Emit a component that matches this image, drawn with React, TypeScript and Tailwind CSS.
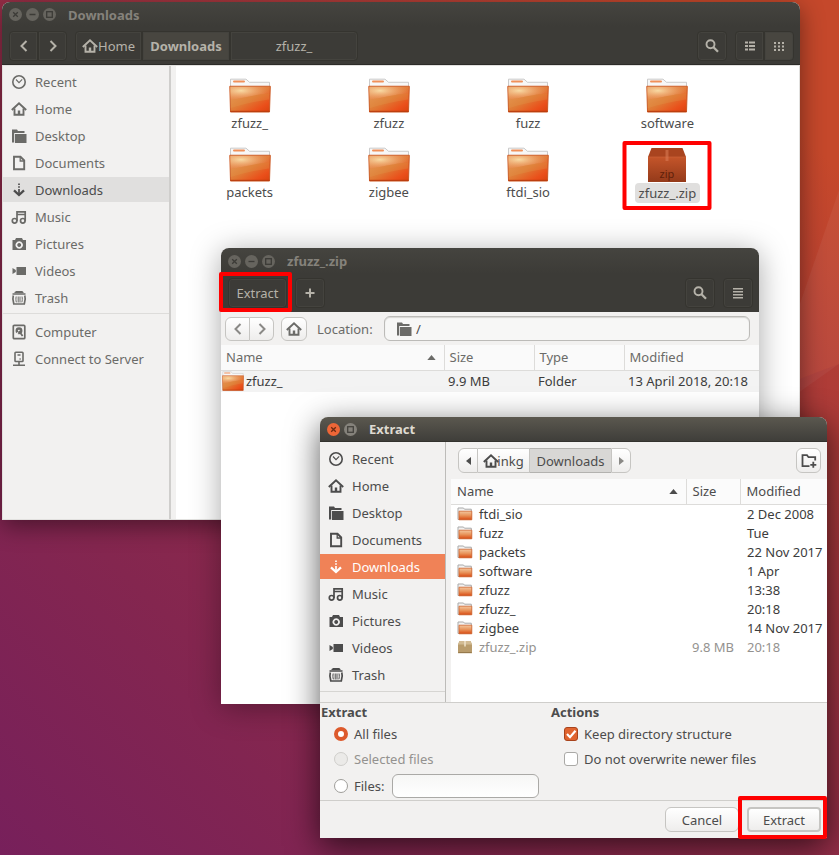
import React, { useId, useState } from 'react';
import clsx from 'clsx';

type IconName =
  | 'recent' | 'home' | 'desktop' | 'documents' | 'downloads' | 'music'
  | 'pictures' | 'videos' | 'trash' | 'computer' | 'server';

const iconShapes: Record<IconName, React.ReactNode> = {
  recent: (
    <g fill="none" stroke="currentColor">
      <circle cx="8" cy="8" r="6.2" strokeWidth="1.6" />
      <path d="M5 5.5 8 8.6l3.2-3.2" strokeWidth="1.1" />
    </g>
  ),
  home: (
    <g fill="none" stroke="currentColor" strokeWidth="1.9">
      <path d="M.8 9 8 2.2 15.2 9" />
      <path d="M3.5 7.5v6.2h9V7.5" />
      <path d="M8 13.5V9.5" strokeWidth="2.4" />
    </g>
  ),
  desktop: (
    <g fill="currentColor">
      <path d="M1 1.500h5l1 1.500h6.500V5H3.200v9.500H1z" />
      <path d="M4 6h11.500v9H4z" />
    </g>
  ),
  documents: (
    <g fill="none" stroke="currentColor" strokeWidth="1.9">
      <path d="M3 1.800h6.500l3.700 3.700v8.700H3z" />
      <path d="M9.200 2v4h4" strokeWidth="1.3" />
    </g>
  ),
  downloads: (
    <g fill="none" stroke="currentColor">
      <path d="M8 1.500V3M8 4.200v1.500M8 7v6" strokeWidth="1.700" />
      <path d="M3 8.300 8 13l5-4.700" strokeWidth="2.300" />
    </g>
  ),
  music: (
    <g fill="none" stroke="currentColor" strokeWidth="1.700">
      <circle cx="3.600" cy="11.800" r="2.300" />
      <circle cx="11.800" cy="11.800" r="2.300" />
      <path d="M6 12V2.800h8.200V12M6 5.500h8" />
    </g>
  ),
  pictures: (
    <path
      fill="currentColor"
      fillRule="evenodd"
      d="M5 2h6l1 2h3v10H1.500V4H4zM8.200 5.300a3.700 3.700 0 1 0 .01 0zM8.200 7.100a1.900 1.900 0 1 1-.01 0z"
    />
  ),
  videos: <path fill="currentColor" d="M5.500 4H15v8H5.500zM1.500 5 4.800 7v2L1.500 11z" />,
  trash: (
    <g fill="none" stroke="currentColor">
      <path d="M4.500 1.800h7.200M1.500 4h13" strokeWidth="1.700" />
      <path d="M3.500 2.500h9" strokeWidth="1.200" />
      <path d="M2.300 5.500c-.8 2.500-.8 4.500.5 8.500h10.500c1.300-4 1.300-6 .5-8.500" strokeWidth="1.700" />
      <path d="M5.200 6.500c-.4 2-.4 4 .2 5.800M7.200 6.500v6M9 6.500v6M11 6.500c.4 2 .4 4-.2 5.800" strokeWidth="1" />
    </g>
  ),
  computer: (
    <g fill="none" stroke="currentColor">
      <rect x="2.300" y="1.300" width="11.500" height="13.400" rx="1" strokeWidth="1.700" />
      <circle cx="8" cy="6.800" r="2.300" strokeWidth="2.300" />
      <path d="M4 11.500 7 8.500" stroke="#f2f1f0" strokeWidth="1.600" />
      <path d="m8 7 3.600 5" strokeWidth="1.800" />
    </g>
  ),
  server: (
    <g fill="none" stroke="currentColor" strokeWidth="1.600">
      <rect x="4" y="1.200" width="8" height="9.300" rx=".8" />
      <path d="M6.500 4h3M8 10.500v4M2 14.300h12" />
      <path d="M8.500 8h1.200" strokeWidth="1.300" />
    </g>
  ),
};

const Icon = ({ name, className }: { name: IconName; className?: string }) => (
  <svg viewBox="0 0 16 16" className={clsx('size-4 shrink-0', className)} aria-hidden="true">
    {iconShapes[name]}
  </svg>
);

const SearchIcon = () => (
  <svg viewBox="0 0 16 16" className="size-4" fill="none" stroke="currentColor" aria-hidden="true">
    <circle cx="6.500" cy="6.300" r="4" strokeWidth="1.900" />
    <path d="m9.500 9.300 4.500 4.500" strokeWidth="2.300" />
  </svg>
);

const Chevron = ({ flip }: { flip?: boolean }) => (
  <svg viewBox="0 0 16 16" className={clsx('size-4', flip && 'rotate-180')} fill="none" stroke="currentColor" aria-hidden="true">
    <path d="M10.500 3 5.500 8l5 5" strokeWidth="2" />
  </svg>
);

const FolderIcon = ({ className }: { className?: string }) => {
  const id = useId();
  return (
    <svg viewBox="0 0 42 36" className={clsx('shrink-0', className)} preserveAspectRatio="none" aria-hidden="true">
      <defs>
        <linearGradient id={`${id}-base`} x1="0" y1="0" x2="1" y2="1">
          <stop offset="0" stopColor="#e89b5c" />
          <stop offset="0.500" stopColor="#e07a35" />
          <stop offset="0.800" stopColor="#ea4f1a" />
          <stop offset="1" stopColor="#d8430f" />
        </linearGradient>
        <radialGradient id={`${id}-glow`} cx="0.270" cy="0.300" r="0.700">
          <stop offset="0" stopColor="#f8dba4" />
          <stop offset="1" stopColor="#f0a070" stopOpacity="0.150" />
        </radialGradient>
      </defs>
      <path d="M1.500 34V1.200h15.500l3.500 3.200h20V34z" fill="#f7f7f7" stroke="#c9c9c9" />
      <rect x="4" y="2.500" width="12" height="2" rx="1" fill="#f0905a" />
      <path d="M.8 8.500h40.500l-.8 26.500h-39z" fill={`url(#${id}-base)`} stroke="#cc5a26" />
      <path d="M1.300 9h39.500l-.5 7C26 17 14 20.500 1.500 22.500z" fill={`url(#${id}-glow)`} />
      <path d="M1.500 22.500C14 20.500 26 17 40.300 16l-.2 6C26 24 14 27 1.600 31z" fill="#e0a050" opacity=".250" />
      <path d="M1.500 34.300h39" stroke="#b73a0c" />
    </svg>
  );
};

const SmallFolder = () => {
  const id = useId();
  return (
    <svg viewBox="0 0 16 14" className="h-3.5 w-4 shrink-0" aria-hidden="true">
      <defs>
        <linearGradient id={id} x1="0" y1="0" x2="0" y2="1">
          <stop offset="0" stopColor="#f3c79f" />
          <stop offset="0.500" stopColor="#e8935a" />
          <stop offset="1" stopColor="#d94a12" />
        </linearGradient>
      </defs>
      <path d="M1 12.500V1h5.500l1 1.200h6.800v10.300z" fill="#f2f2f2" stroke="#a9a9a9" />
      <path d="M2 4.200h12.800v8.600H2z" fill={`url(#${id})`} stroke="#d2652f" strokeWidth=".8" />
    </svg>
  );
};

const SmallPackage = () => (
  <svg viewBox="0 0 16 14" className="h-3.5 w-4 shrink-0" aria-hidden="true">
    <path d="M2.500 1h11L15 4.500v8.800H1V4.500z" fill="#b99c6c" />
    <path d="M2.500 1h11L15 4.500H1z" fill="#d2bb93" />
    <path d="M8 1v5.500" stroke="#efe3cb" strokeWidth="1.500" />
    <path d="M1.300 12.500h13.400" stroke="#96794c" />
  </svg>
);

const PackageIcon = () => {
  const id = useId();
  return (
    <svg viewBox="0 0 42 36" className="h-9 w-[42px]" aria-hidden="true">
      <defs>
        <linearGradient id={id} x1="0" y1="0" x2="0" y2="1">
          <stop offset="0" stopColor="#c4552a" />
          <stop offset="1" stopColor="#943a1a" />
        </linearGradient>
      </defs>
      <path d="M2 10h38v25H2z" fill={`url(#${id})`} />
      <path d="M5.500 1h31L40 10H2z" fill="#a9441f" />
      <path d="M2 10h38" stroke="#cc6238" strokeWidth=".7" />
      <path d="M19.500 3h3v11h-3z" fill="#d87a53" opacity=".6" />
      <text x="21" y="31" textAnchor="middle" fontSize="11" fill="#5f200a">zip</text>
    </svg>
  );
};

const places: { name: string; icon: IconName }[] = [
  { name: 'Recent', icon: 'recent' },
  { name: 'Home', icon: 'home' },
  { name: 'Desktop', icon: 'desktop' },
  { name: 'Documents', icon: 'documents' },
  { name: 'Downloads', icon: 'downloads' },
  { name: 'Music', icon: 'music' },
  { name: 'Pictures', icon: 'pictures' },
  { name: 'Videos', icon: 'videos' },
  { name: 'Trash', icon: 'trash' },
];

const devices: { name: string; icon: IconName }[] = [
  { name: 'Computer', icon: 'computer' },
  { name: 'Connect to Server', icon: 'server' },
];

const WindowButton = ({ kind, active }: { kind: 'close' | 'min' | 'max'; active?: boolean }) => (
  <button
    aria-label={kind}
    className={clsx(
      'flex size-[13px] items-center justify-center rounded-full',
      active && kind === 'close' && 'bg-[#ee6637] text-[#6b2a12]',
      active && kind !== 'close' && 'bg-[#85827b] text-[#45433e]',
      !active && 'bg-[#66645e] text-[#3c3b37]'
    )}
  >
    <svg viewBox="0 0 13 13" className="size-[13px]" fill="none" stroke="currentColor" strokeWidth="1.300" aria-hidden="true">
      {kind === 'close' && <path d="m4.200 4.200 4.600 4.600m0-4.600L4.200 8.800" />}
      {kind === 'min' && <path d="M3.500 6.500h6" />}
      {kind === 'max' && <rect x="3.700" y="3.700" width="5.600" height="5.600" />}
    </svg>
  </button>
);

const PlaceRow = ({ name, icon, className }: { name: string; icon: IconName; className?: string }) => (
  <button className={clsx('mb-0.5 flex h-[25px] w-full items-center gap-2 pl-2 text-left whitespace-nowrap', className)}>
    <Icon name={icon} />
    {name}
  </button>
);

const darkButton = 'flex h-[30px] items-center justify-center border border-[#35342f] shadow-[inset_0_0_0_1px_#44433e]';

const files = ['zfuzz_', 'zfuzz', 'fuzz', 'software', 'packets', 'zigbee', 'ftdi_sio'];

const NautilusWindow = () => (
  <section className="absolute top-0.5 right-[39px] left-0.5 flex min-h-[518px] flex-col overflow-hidden rounded-t-lg bg-white shadow-[0_6px_24px_rgba(0,0,0,0.45)]">
    <header className="border-b border-[#2c2b28] bg-linear-to-b from-[#45443f] to-[#3c3b37] to-40% pb-[3px] text-[#b5b2a9]">
      <div className="flex h-[29px] items-center gap-1 pb-1 pl-[7px]">
        <WindowButton kind="close" />
        <WindowButton kind="min" />
        <WindowButton kind="max" />
        <h1 className="pl-2 font-bold text-[#85827b]">Downloads</h1>
      </div>
      <div className="flex items-center pr-1.5 pl-[7px]">
        <button aria-label="Back" className={clsx(darkButton, 'w-[29px] rounded-l')}><Chevron /></button>
        <button aria-label="Forward" className={clsx(darkButton, 'w-[29px] rounded-r')}><Chevron flip /></button>
        <nav className="ml-2 flex">
          <button className={clsx(darkButton, 'w-[67px] rounded-l')}><Icon name="home" />Home</button>
          <button className={clsx(darkButton, 'w-[88px] bg-[#484640] font-bold')}>Downloads</button>
          <button className={clsx(darkButton, 'w-[128px] rounded-r')}>zfuzz_</button>
        </nav>
        <button aria-label="Search" className={clsx(darkButton, 'ml-auto w-[30px] rounded')}><SearchIcon /></button>
        <button aria-label="List view" className={clsx(darkButton, 'ml-2 w-[29px] rounded-l')}>
          <svg viewBox="0 0 16 16" className="size-4" fill="currentColor" aria-hidden="true">
            <path d="M3 3.500h3v2H3zM7 3.500h6v2H7zM3 7h3v2H3zM7 7h6v2H7zM3 10.500h3v2H3zM7 10.500h6v2H7z" />
          </svg>
        </button>
        <button aria-label="Icon view" className={clsx(darkButton, 'w-[30px] rounded-r bg-[#484640]')}>
          <svg viewBox="0 0 16 16" className="size-4" fill="currentColor" aria-hidden="true">
            <path d="M3 4h2v2H3zM7 4h2v2H7zM11 4h2v2h-2zM3 7.500h2v2H3zM7 7.500h2v2H7zM11 7.500h2v2h-2zM3 11h2v2H3zM7 11h2v2H7zM11 11h2v2h-2z" />
          </svg>
        </button>
      </div>
    </header>
    <div className="flex grow border border-[#e2e1df]">
      <aside className="w-[168px] shrink-0 border-r-2 border-[#cfcecc] bg-[#f2f1f0] pt-[3px] text-[#6b6b68]">
        {places.map((p) => (
          <PlaceRow key={p.name} {...p} className={clsx(p.name === 'Downloads' && 'bg-[#e0dfde] text-[#4c4c4c]')} />
        ))}
        <hr className="mt-[3px] mb-[5px] border-[#dddcda]" />
        {devices.map((p) => <PlaceRow key={p.name} {...p} />)}
      </aside>
      <div className="w-[5px] shrink-0 bg-[#f2f1f0]" />
      <ul className="grid grow grid-cols-4 content-start gap-y-[9px] pt-3 pr-[62px] pl-1 text-[#4c4c4c]">
        {files.map((name) => (
          <li key={name} className="flex h-[60px] flex-col items-center">
            <FolderIcon className="h-[35px] w-[42px]" />
            <span className="rounded px-1 leading-5">{name}</span>
          </li>
        ))}
        <li className="relative flex h-[60px] flex-col items-center">
          <PackageIcon />
          <span className="rounded bg-[#e0dfde] px-1 leading-5">zfuzz_.zip</span>
          <div className="absolute -top-[6px] left-1/2 h-[69px] w-[89px] -translate-x-1/2 rounded-xs border-4 border-[#ff0000]" />
        </li>
      </ul>
    </div>
  </section>
);

const lightButton = 'flex items-center justify-center border border-[#c6c5c2] bg-linear-to-b from-white to-[#eeedec]';

const SortArrow = () => (
  <svg viewBox="0 0 10 6" className="h-[5px] w-[9px]" fill="currentColor" aria-hidden="true">
    <path d="M5 0 10 6H0z" />
  </svg>
);

const ArchiveWindow = () => (
  <section className="absolute top-[248px] right-20 left-[221px] flex min-h-[456px] flex-col rounded-t-lg bg-white shadow-[0_4px_30px_rgba(0,0,0,0.35)]">
    <header className="rounded-t-lg bg-linear-to-b from-[#45443f] to-[#3c3b37] to-40% pb-1 text-[#b5b2a9]">
      <div className="flex h-[30px] items-center gap-1 pb-1 pl-[7px]">
        <WindowButton kind="close" />
        <WindowButton kind="min" />
        <WindowButton kind="max" />
        <h2 className="pl-2 font-bold text-[#85827b]">zfuzz_.zip</h2>
      </div>
      <div className="flex items-center gap-2 pr-1.5 pl-[7px]">
        <div className="relative">
          <button className={clsx(darkButton, 'w-[59px] rounded')}>Extract</button>
          <div className="pointer-events-none absolute -top-[6px] -right-[5px] -bottom-1 -left-[9px] rounded-xs border-4 border-[#ff0000]" />
        </div>
        <button aria-label="Add files" className={clsx(darkButton, 'w-[30px] rounded')}>
          <svg viewBox="0 0 16 16" className="size-4" stroke="currentColor" strokeWidth="2" aria-hidden="true">
            <path d="M8 3.500v9M3.500 8h9" />
          </svg>
        </button>
        <button aria-label="Search" className={clsx(darkButton, 'ml-auto w-[30px] rounded')}><SearchIcon /></button>
        <button aria-label="Menu" className={clsx(darkButton, 'w-[30px] rounded')}>
          <svg viewBox="0 0 16 16" className="size-4" fill="currentColor" aria-hidden="true">
            <path d="M3 3h10v1.500H3zM3 6h10v1.500H3zM3 9h10v1.500H3zM3 12h10v1.500H3z" />
          </svg>
        </button>
      </div>
    </header>
    <div className="flex h-[33px] items-center bg-[#f2f1f0] px-1 pr-[9px] text-[#6b6b68]">
      <button aria-label="Back" className={clsx(lightButton, 'h-6 w-[25px] rounded-l-md text-[#8a8986]')}><Chevron /></button>
      <button aria-label="Forward" className={clsx(lightButton, 'h-6 w-6 rounded-r-md border-l-0 text-[#8a8986]')}><Chevron flip /></button>
      <button aria-label="Home" className={clsx(lightButton, 'ml-[7px] h-6 w-[26px] rounded-md')}><Icon name="home" /></button>
      <label htmlFor="location" className="ml-[10px] w-[67px]">Location:</label>
      <div className="flex h-[25px] grow items-center gap-1 rounded-md border border-[#bcbbb8] bg-[#f7f7f6] pl-[11px] shadow-[inset_0_1px_1px_#d5d4d2]">
        <Icon name="desktop" />
        <input id="location" defaultValue="/" className="w-full bg-transparent text-[#4c4c4c] outline-none" />
      </div>
    </div>
    <table className="w-full table-fixed text-left text-[#3c3c3c]">
      <colgroup>
        <col />
        <col className="w-[90px]" />
        <col className="w-[90px]" />
        <col className="w-[135px]" />
      </colgroup>
      <thead>
        <tr className="h-[25px] border-b border-[#dddcda] bg-[#fafafa] text-[#6b6b68]">
          <th className="pr-2 pl-[5px] font-normal">
            <span className="flex items-center justify-between">Name <SortArrow /></span>
          </th>
          <th className="border-l border-[#dddcda] pl-[5px] font-normal">Size</th>
          <th className="border-l border-[#dddcda] pl-[5px] font-normal">Type</th>
          <th className="border-l border-[#dddcda] pl-[5px] font-normal">Modified</th>
        </tr>
      </thead>
      <tbody>
        <tr className="h-[22px] bg-[#f3f3f3]">
          <td><span className="flex items-center gap-0.5 pl-px"><FolderIcon className="h-5 w-[22px]" />zfuzz_</span></td>
          <td className="pl-1">9.9 MB</td>
          <td className="pl-1">Folder</td>
          <td className="pl-1 whitespace-nowrap">13 April 2018, 20:18</td>
        </tr>
      </tbody>
    </table>
  </section>
);

const entries = [
  { name: 'ftdi_sio', modified: '2 Dec 2008' },
  { name: 'fuzz', modified: 'Tue' },
  { name: 'packets', modified: '22 Nov 2017' },
  { name: 'software', modified: '1 Apr' },
  { name: 'zfuzz', modified: '13:38' },
  { name: 'zfuzz_', modified: '20:18' },
  { name: 'zigbee', modified: '14 Nov 2017' },
];

const radioClass =
  'size-[14px] appearance-none rounded-full border border-[#9f9e9a] bg-white checked:border-4 checked:border-[#dd5a2c] disabled:border-[#cfcecb] disabled:bg-[#ebeae8]';

const CheckBox = ({ label, checked, onChange }: { label: string; checked: boolean; onChange: (v: boolean) => void }) => (
  <label className="flex h-[25px] items-center gap-[6px] pl-[13px]">
    <span className="relative flex">
      <input
        type="checkbox"
        checked={checked}
        onChange={(e) => onChange(e.target.checked)}
        className="size-[14px] appearance-none rounded-[3px] border border-[#aaa9a6] bg-white checked:border-[#a8431c] checked:bg-[#e0642f]"
      />
      {checked && (
        <svg viewBox="0 0 14 14" className="pointer-events-none absolute inset-0" fill="none" stroke="white" strokeWidth="2.200" aria-hidden="true">
          <path d="m3 7 3 3.200 5.500-6.400" />
        </svg>
      )}
    </span>
    {label}
  </label>
);

const ExtractDialog = () => {
  const [scope, setScope] = useState('all');
  const [keepStructure, setKeepStructure] = useState(true);
  const [skipNewer, setSkipNewer] = useState(false);

  return (
    <section
      role="dialog"
      aria-label="Extract"
      className="absolute top-[417px] right-3 left-80 flex flex-col rounded-t-lg bg-[#f2f1f0] text-[#4c4c4c] shadow-[0_8px_32px_rgba(0,0,0,0.65)]"
    >
      <header className="flex h-[25px] items-center gap-1 rounded-t-lg border-b border-[#33322e] bg-linear-to-b from-[#5b584f] to-[#3f3e3a] pl-[7px]">
        <WindowButton kind="close" active />
        <WindowButton kind="max" active />
        <h2 className="pl-2 font-bold text-[#dfdbd2]">Extract</h2>
      </header>
      <div className="flex h-[260px]">
        <aside className="w-[126px] shrink-0 border-r border-[#bdbcb9] pt-1">
          {places.map((p) => (
            <PlaceRow key={p.name} {...p} className={clsx(p.name === 'Downloads' && 'bg-[#f08257] text-white')} />
          ))}
          <hr className="mt-1 border-[#d6d5d2]" />
        </aside>
        <div className="flex min-w-0 grow flex-col pl-[5px]">
          <div className="flex h-[37px] items-center pr-1.5 pl-[7px]">
            <button aria-label="Scroll left" className={clsx(lightButton, 'h-[25px] w-5 rounded-l-md')}>
              <svg viewBox="0 0 5 8" className="h-2 w-[5px]" fill="currentColor" aria-hidden="true"><path d="M5 0v8L0 4z" /></svg>
            </button>
            <button className={clsx(lightButton, 'h-[25px] w-[52px] border-l-0')}><Icon name="home" className="-mr-0.5" />inkg</button>
            <button className="h-[25px] w-[81px] border-y border-[#b3b2af] bg-[#d8d7d5] text-center">Downloads</button>
            <button aria-label="Scroll right" className={clsx(lightButton, 'h-[25px] w-5 rounded-r-md text-[#8a8986]')}>
              <svg viewBox="0 0 5 8" className="h-2 w-[5px]" fill="currentColor" aria-hidden="true"><path d="M0 0v8l5-4z" /></svg>
            </button>
            <button aria-label="Create folder" className={clsx(lightButton, 'ml-auto h-[25px] w-[25px] rounded-md')}>
              <svg viewBox="0 0 16 16" className="size-4" fill="none" stroke="currentColor" strokeWidth="1.800" aria-hidden="true">
                <path d="M8.500 13.200H1.500V2.200h4.500l1.500 2h6.700V7.500M12.300 8.800v6M9.300 11.800h6" />
              </svg>
            </button>
          </div>
          <div className="grow bg-white">
            <table className="w-full table-fixed text-left">
              <colgroup>
                <col />
                <col className="w-[54px]" />
                <col className="w-[87px]" />
              </colgroup>
              <thead>
                <tr className="h-[25px] border-b border-[#dddcda] bg-[#fbfbfb]">
                  <th className="pr-2 pl-1.5 font-normal">
                    <span className="flex items-center justify-between">Name <SortArrow /></span>
                  </th>
                  <th className="border-l border-[#dddcda] pl-1.5 font-normal">Size</th>
                  <th className="border-l border-[#dddcda] pl-1.5 font-normal">Modified</th>
                </tr>
              </thead>
              <tbody className="text-[#3c3c3c]">
                {entries.map((e) => (
                  <tr key={e.name} className="h-[19px] leading-[19px]">
                    <td><span className="flex items-center gap-1.5 pl-1.5"><SmallFolder />{e.name}</span></td>
                    <td />
                    <td className="pl-[7px] whitespace-nowrap">{e.modified}</td>
                  </tr>
                ))}
                <tr className="h-[19px] leading-[19px] text-[#94928f]">
                  <td><span className="flex items-center gap-1.5 pl-1.5"><SmallPackage />zfuzz_.zip</span></td>
                  <td className="pl-1.5 whitespace-nowrap">9.8 MB</td>
                  <td className="pl-[7px]">20:18</td>
                </tr>
              </tbody>
            </table>
          </div>
        </div>
      </div>
      <div className="flex h-[99px] border-y border-[#cfcecb]">
        <fieldset className="w-[231px] pl-px">
          <legend className="h-[18px] leading-[18px] font-bold">Extract</legend>
          <label className="flex h-[25px] items-center gap-[6px] pl-[13px]">
            <input type="radio" name="scope" className={radioClass} checked={scope === 'all'} onChange={() => setScope('all')} />
            All files
          </label>
          <label className="flex h-[25px] items-center gap-[6px] pl-[13px] text-[#94928f]">
            <input type="radio" name="scope" className={radioClass} disabled />
            Selected files
          </label>
          <div className="flex h-[30px] items-center">
            <label className="flex w-[71px] items-center gap-[6px] pl-[13px]">
              <input type="radio" name="scope" className={radioClass} checked={scope === 'pattern'} onChange={() => setScope('pattern')} />
              Files:
            </label>
            <input
              aria-label="Files pattern"
              className="h-6 w-[147px] rounded-md border border-[#aaa9a6] bg-linear-to-b from-[#f6f6f5] to-white px-2 outline-none"
            />
          </div>
        </fieldset>
        <fieldset>
          <legend className="h-[18px] leading-[18px] font-bold">Actions</legend>
          <CheckBox label="Keep directory structure" checked={keepStructure} onChange={setKeepStructure} />
          <CheckBox label="Do not overwrite newer files" checked={skipNewer} onChange={setSkipNewer} />
        </fieldset>
      </div>
      <footer className="flex h-[37px] items-center justify-end gap-2 pr-1.5">
        <button className={clsx(lightButton, 'h-[25px] w-[74px] rounded-md')}>Cancel</button>
        <div className="relative">
          <button className={clsx(lightButton, 'h-[25px] w-[74px] rounded border-2 border-[#a5a4a1]')}>Extract</button>
          <div className="pointer-events-none absolute -top-[11px] -right-[6px] -bottom-[7px] -left-[9px] rounded-xs border-4 border-[#ff0000]" />
        </div>
      </footer>
    </section>
  );
};

const App = () => (
  <main className="relative min-h-screen overflow-hidden bg-[linear-gradient(45deg,#77205b_0%,#84264f_24%,#922c48_48%,#c5482b_90%)] font-['Noto_Sans','Open_Sans',sans-serif] text-[13px] leading-5">
    <svg viewBox="0 0 839 855" preserveAspectRatio="none" className="absolute inset-0 size-full" aria-hidden="true">
      <path d="M839 190 760 420l79-56z" fill="#fff" opacity=".05" />
      <path d="M839 364 760 394v461h79z" fill="#8a2c48" opacity=".150" />
    </svg>
    <NautilusWindow />
    <ArchiveWindow />
    <ExtractDialog />
  </main>
);

export default App;
